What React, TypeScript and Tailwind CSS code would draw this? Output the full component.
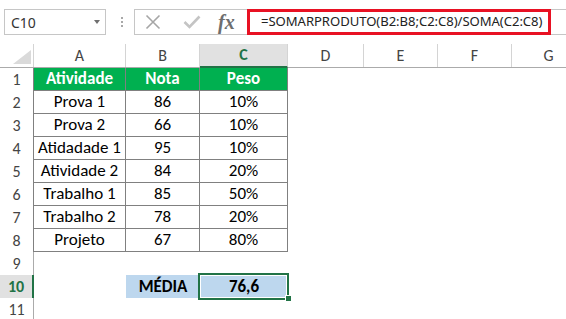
import React from 'react'

const cellFont = 'font-[Carlito,Calibri,Lato,sans-serif]'

const columns = [
  { label: 'A', width: 'w-[92px]' },
  { label: 'B', width: 'w-[74px]' },
  { label: 'C', width: 'w-[88px]' },
  { label: 'D', width: 'w-[76px]' },
  { label: 'E', width: 'w-[74px]' },
  { label: 'F', width: 'w-[74px]' },
  { label: 'G', width: 'w-[74px]' },
]

const grades = [
  ['Prova 1', '86', '10%'],
  ['Prova 2', '66', '10%'],
  ['Atidadade 1', '95', '10%'],
  ['Atividade 2', '84', '20%'],
  ['Trabalho 1', '85', '50%'],
  ['Trabalho 2', '78', '20%'],
  ['Projeto', '67', '80%'],
]

const tableWidths = ['w-[92px]', 'w-[74px]', 'w-[88px]']

const CancelIcon = () => (
  <svg width="16" height="16" viewBox="0 0 16 16" className="shrink-0">
    <path d="M1.5 1.5 L14.5 14.5 M14.5 1.5 L1.5 14.5" stroke="#a6a6a6" strokeWidth="1.6" fill="none" />
  </svg>
)

const EnterIcon = () => (
  <svg width="18" height="14" viewBox="0 0 18 14" className="shrink-0">
    <path d="M1.5 7 L6.5 12 L16.5 1.5" stroke="#c4c4c4" strokeWidth="2.6" fill="none" />
  </svg>
)

const FormulaBar = () => (
  <div className="flex h-[44px] items-start pt-[9px]">
    <div className="ml-[4px] flex h-[26px] w-[102px] shrink-0 items-center justify-between border border-[#c6c6c6] pl-[6px] pr-[5px]">
      <span className="font-['Noto_Sans',sans-serif] text-[14px] text-[#333]">C10</span>
      <span className="h-0 w-0 border-x-[3.5px] border-t-[4px] border-x-transparent border-t-[#6f6f6f]" />
    </div>
    <div className="ml-[14px] flex h-[26px] w-[3px] shrink-0 flex-col items-center justify-center gap-[2px]">
      <span className="h-[2px] w-[2px] bg-[#a8a8a8]" />
      <span className="h-[2px] w-[2px] bg-[#a8a8a8]" />
      <span className="h-[2px] w-[2px] bg-[#a8a8a8]" />
    </div>
    <div className="ml-[11px] flex h-[26px] w-[440px] shrink-0 items-start border border-y-[#c6c6c6] border-l-[#c6c6c6] border-r-transparent">
      <div className="flex h-[24px] w-[112px] shrink-0 items-center pl-[10px]">
        <CancelIcon />
        <span className="ml-[22px]"><EnterIcon /></span>
        <span className="ml-[17px] font-['Liberation_Serif',serif] text-[20px] font-bold italic leading-none text-[#6e6e6e]">
          fx
        </span>
      </div>
      <div className="-my-px flex h-[26px] w-[304px] shrink-0 items-center border-[3px] border-[#e81123] pl-[11px]">
        <span className="whitespace-nowrap font-['Noto_Sans',sans-serif] text-[13.1px] tracking-[-0.05px] text-[#222]">
          =SOMARPRODUTO(B2:B8;C2:C8)/SOMA(C2:C8)
        </span>
      </div>
    </div>
  </div>
)

const ColumnHeaders = () => (
  <div className={`flex h-[24px] border-b border-[#ababab] ${cellFont}`}>
    <div className="relative w-[34px] shrink-0 border-r border-[#d4d4d4]">
      <span className="absolute bottom-[3px] right-[2px] h-0 w-0 border-b-[14px] border-l-[18px] border-b-[#dadada] border-l-transparent" />
    </div>
    {columns.map((col) =>
      col.label === 'C' ? (
        <div
          key={col.label}
          className={`${col.width} -mb-px flex shrink-0 items-center justify-center border-b-2 border-r border-b-[#217346] border-r-[#d4d4d4] bg-[#e1e1e1] text-[16px] font-bold text-[#217346]`}
        >
          {col.label}
        </div>
      ) : (
        <div
          key={col.label}
          className={`${col.width} flex shrink-0 items-center justify-center border-r border-[#d4d4d4] text-[16px] text-[#444]`}
        >
          {col.label}
        </div>
      )
    )}
  </div>
)

const RowHeader = ({ n, border }: { n: number; border: string }) => (
  <div className={`flex w-[34px] shrink-0 items-center justify-center border-r ${border} text-[16px] text-[#444]`}>
    {n}
  </div>
)

export default function App() {
  return (
    <div className={`h-[319px] w-[566px] overflow-hidden bg-white ${cellFont}`}>
      <FormulaBar />
      <ColumnHeaders />

      {/* row 1: table heading */}
      <div className="flex h-[23px]">
        <RowHeader n={1} border="border-[#808080]" />
        {['Atividade', 'Nota', 'Peso'].map((t, i) => (
          <div
            key={t}
            className={`${tableWidths[i]} flex shrink-0 items-center justify-center border-b border-r border-[#808080] bg-[#00b050] text-[17px] font-bold text-white`}
          >
            {t}
          </div>
        ))}
      </div>

      {grades.map((row, r) => (
        <div key={r} className="flex h-[23px]">
          <RowHeader n={r + 2} border="border-[#808080]" />
          {row.map((t, i) => (
            <div
              key={i}
              className={`${tableWidths[i]} flex shrink-0 items-center justify-center border-b border-r border-[#808080] text-[17px] text-black`}
            >
              {t}
            </div>
          ))}
        </div>
      ))}

      <div className="flex h-[23px]">
        <RowHeader n={9} border="border-[#ababab]" />
      </div>

      {/* row 10: weighted average */}
      <div className="flex h-[23px]">
        <div className="flex w-[34px] shrink-0 items-center justify-center border-r-2 border-[#217346] bg-[#e1e1e1] text-[16px] font-bold text-[#217346]">
          10
        </div>
        <div className="w-[92px] shrink-0" />
        <div className="flex w-[74px] shrink-0 items-center justify-center bg-[#bdd7ee] text-[17px] font-bold text-black">
          MÉDIA
        </div>
        <div className="relative flex w-[88px] shrink-0 items-center justify-center bg-[#bdd7ee] text-[17px] font-bold text-black">
          76,6
          <span className="absolute -bottom-[2px] -left-[2px] -right-[1px] -top-[2px] border-2 border-[#217346] shadow-[inset_0_0_0_1px_#fff]" />
          <span className="absolute -bottom-[4px] -right-[4px] h-[7px] w-[7px] border border-white bg-[#217346]" />
        </div>
      </div>

      <div className="flex h-[23px]">
        <RowHeader n={11} border="border-[#ababab]" />
      </div>
    </div>
  )
}
